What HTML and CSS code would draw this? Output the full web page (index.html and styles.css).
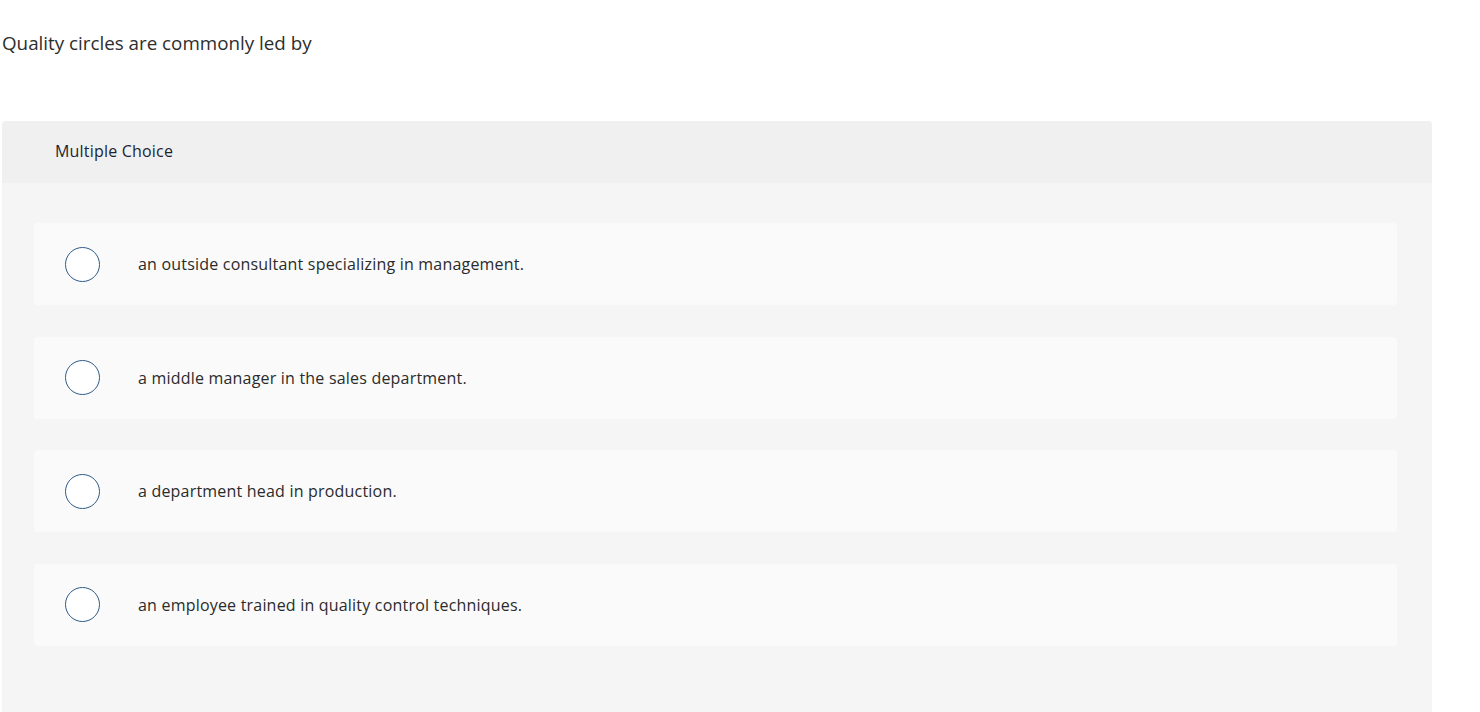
FILE: index.html
```html
<!DOCTYPE html>
<html lang="en">
<head>
<meta charset="utf-8">
<title>Quality circles</title>
<link rel="stylesheet" href="styles.css">
</head>
<body>
<main class="page">
  <p class="question">Quality circles are commonly led by</p>
  <section class="panel">
    <header class="panel-head">Multiple Choice</header>
    <div class="panel-body">
      <label class="option"><span class="radio"></span><span class="option-text">an outside consultant specializing in management.</span></label>
      <label class="option"><span class="radio"></span><span class="option-text">a middle manager in the sales department.</span></label>
      <label class="option"><span class="radio"></span><span class="option-text">a department head in production.</span></label>
      <label class="option"><span class="radio"></span><span class="option-text">an employee trained in quality control techniques.</span></label>
    </div>
  </section>
</main>
</body>
</html>
```
FILE: styles.css
```css
html, body {
  margin: 0;
  padding: 0;
  background: #ffffff;
}
body {
  font-family: "Open Sans", Lato, Arial, sans-serif;
  color: #2b2b2b;
}
.page {
  padding: 0 48px 0 2px;
}
.question {
  margin: 0;
  padding-top: 30px;
  font-size: 18.8px;
  line-height: 26px;
  height: 91px;
  color: #2d2d2d;
}
.panel {
  width: 1430px;
  border-radius: 4px 4px 0 0;
  background: #f5f5f5;
  overflow: hidden;
}
.panel-head {
  height: 62px;
  box-sizing: border-box;
  padding-left: 53px;
  padding-bottom: 3px;
  display: flex;
  align-items: center;
  background: #f0f0f0;
  font-size: 16px;
  letter-spacing: 0.2px;
  color: #1d2533;
}
.panel-body {
  padding: 40px 35px 80px 32px;
  display: flex;
  flex-direction: column;
  gap: 31.5px;
}
.option {
  height: 82px;
  border-radius: 4px;
  background: #fafafa;
  display: flex;
  align-items: center;
  padding-left: 31px;
  box-sizing: border-box;
}
.radio {
  width: 35px;
  height: 35px;
  box-sizing: border-box;
  border: 1.6px solid #2e5b88;
  border-radius: 50%;
  background: #ffffff;
  flex: none;
}
.option-text {
  margin-left: 38px;
  font-size: 16px;
  letter-spacing: 0.2px;
  color: #2b2b2b;
}
```
